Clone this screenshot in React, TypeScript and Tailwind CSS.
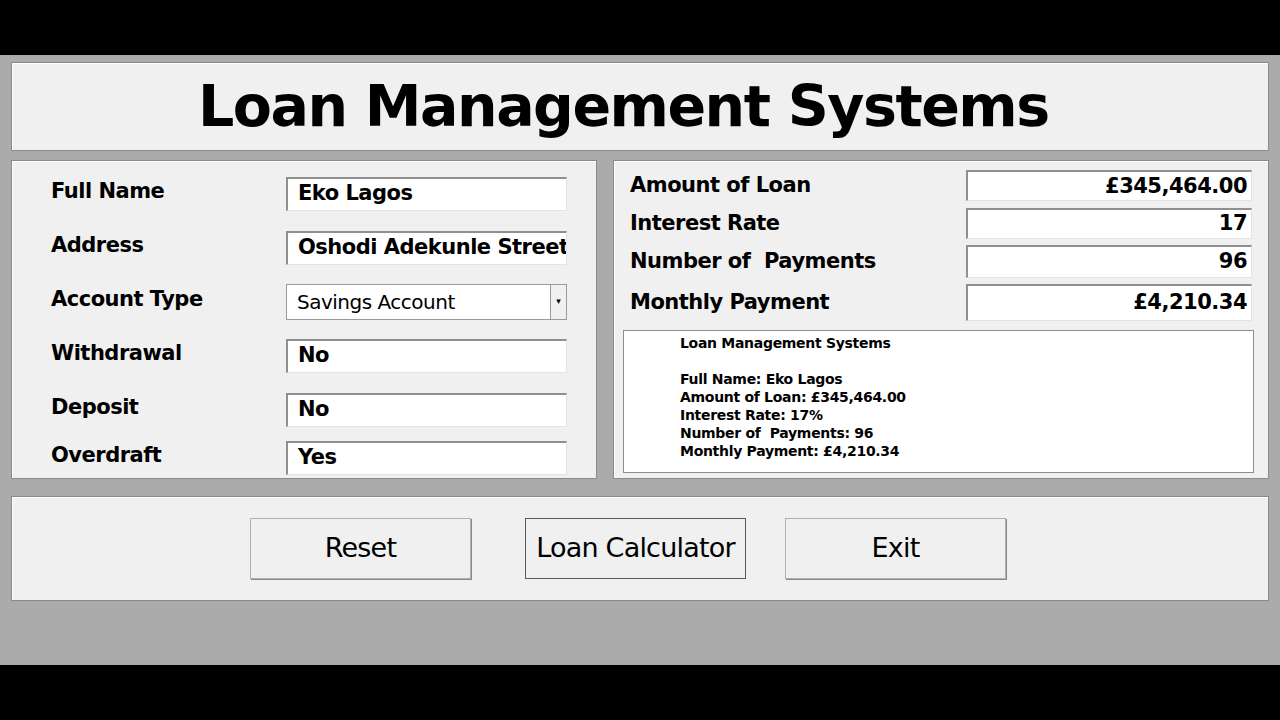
const panel = "bg-[#f0f0f0] border border-[#8a8a8a] shadow-[inset_1px_1px_0_#fff]";
const input = "bg-white border-t-2 border-l-2 border-[#8f8f8f] border-b border-r border-b-[#e3e3e3] border-r-[#e3e3e3]";

const leftRows: [string, string, number][] = [
  ["Full Name", "Eko Lagos", 0],
  ["Address", "Oshodi Adekunle Street", 0],
  ["Account Type", "Savings Account", 1],
  ["Withdrawal", "No", 0],
  ["Deposit", "No", 0],
  ["Overdraft", "Yes", 0],
];

const rightRows: [string, string, string][] = [
  ["Amount of Loan", "£345,464.00", "h-[31px]"],
  ["Interest Rate", "17", "h-[31px]"],
  ["Number of  Payments", "96", "h-[33px]"],
  ["Monthly Payment", "£4,210.34", "h-[37px]"],
];

export default function App() {
  return (
    <div className="w-[1280px] h-[720px] bg-black flex flex-col" style={{ fontFamily: '"DejaVu Sans", Verdana, sans-serif' }}>
      <div className="h-[55px]" />
      <div className="h-[610px] bg-[#ababab] flex flex-col px-[11px] pt-[7px] gap-[9px]">
        <div className={`${panel} h-[89px] flex items-center pl-[186px]`}>
          <h1 className="text-[57px] font-bold tracking-[-1.5px] text-black leading-none">Loan Management Systems</h1>
        </div>
        <div className="flex gap-[16px] h-[319px]">
          <div className={`${panel} w-[586px] flex flex-col pl-[39px] pr-[29px] pt-[16px] gap-[21px]`}>
            {leftRows.map(([l, v, sel], i) => (
              <div key={l} className="flex items-center justify-between h-[33px]" style={i === 5 ? { marginTop: -6 } : undefined}>
                <span className="text-[21px] font-bold tracking-[-0.5px] -mt-[4px]">{l}</span>
                {sel ? (
                  <div className="w-[281px] h-[36px] bg-white border border-[#9a9a9a] flex items-center">
                    <span className="flex-1 pl-[10px] text-[20px] tracking-[-0.5px]">{v}</span>
                    <div className="w-[16px] h-full border-l border-[#9a9a9a] bg-[#f0f0f0] flex items-center justify-center text-[9px]">▾</div>
                  </div>
                ) : (
                  <div className={`${input} w-[281px] h-[34px] flex items-center pl-[10px] text-[21px] font-bold tracking-[-0.5px] whitespace-nowrap overflow-hidden`}>{v}</div>
                )}
              </div>
            ))}
          </div>
          <div className={`${panel} flex-1 flex flex-col pl-[16px] pr-[16px] pt-[9px]`}>
            <div className="flex flex-col gap-[6px] pr-0">
              {rightRows.map(([l, v, h]) => (
                <div key={l} className="flex items-center justify-between">
                  <span className="text-[21px] font-bold tracking-[-0.5px] whitespace-pre">{l}</span>
                  <div className={`${input} ${h} w-[286px] flex items-center justify-end pr-[4px] text-[21px] font-bold tracking-[-0.5px]`}>{v}</div>
                </div>
              ))}
            </div>
            <div className="mt-[9px] -ml-[7px] mr-[-2px] h-[143px] bg-white border border-[#8f8f8f] pl-[56px] pt-[3px] text-[14px] font-bold leading-[18px] whitespace-pre tracking-[-0.3px]">
              {"Loan Management Systems\n\nFull Name: Eko Lagos\nAmount of Loan: £345,464.00\nInterest Rate: 17%\nNumber of  Payments: 96\nMonthly Payment: £4,210.34"}
            </div>
          </div>
        </div>
        <div className={`${panel} h-[105px] mt-[8px] flex items-center justify-center gap-[54px] pl-[6px] pr-[30px]`}>
          {["Reset", "Loan Calculator", "Exit"].map((b, i) => (
            <button key={b} className={`w-[221px] h-[61px] bg-[#f0f0f0] text-[27px] tracking-[-0.8px] ${i === 1 ? "border border-[#5a5a5a]" : "border border-[#b0b0b0] shadow-[1px_1px_0_#888]"} ${i === 2 ? "-ml-[15px]" : ""}`} style={{ fontFamily: '"DejaVu Sans", sans-serif' }}>
              {b}
            </button>
          ))}
        </div>
      </div>
      <div className="flex-1" />
    </div>
  );
}
